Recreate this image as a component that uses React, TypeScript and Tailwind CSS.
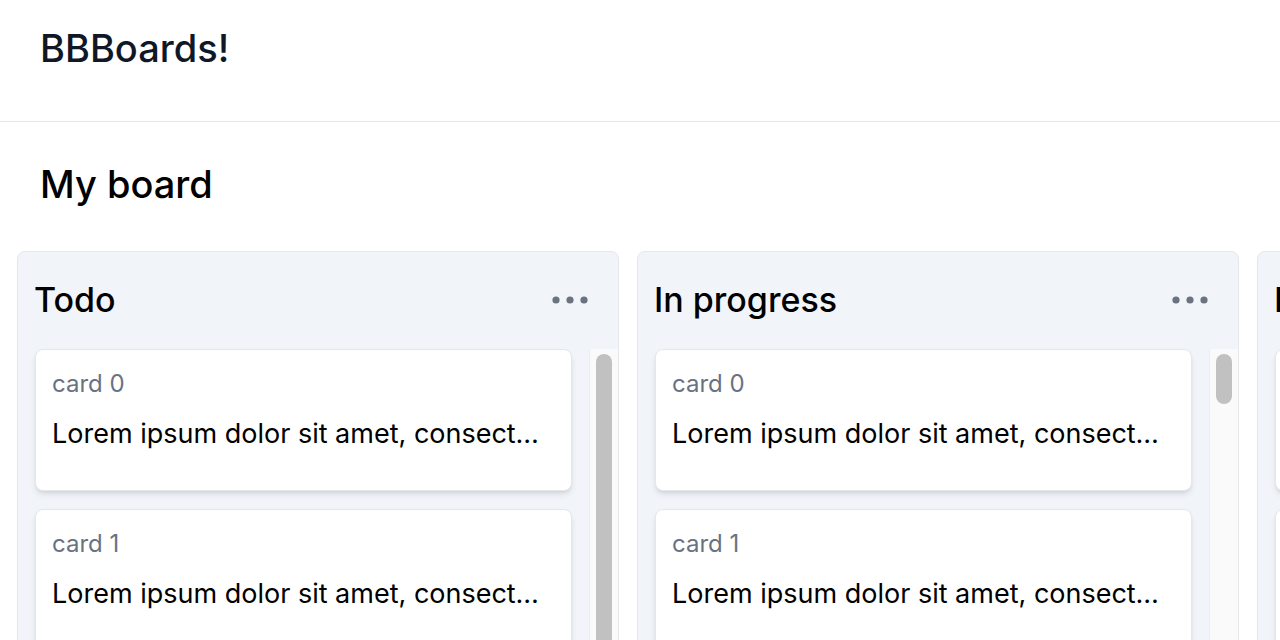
import React from "react";

const LOREM = "Lorem ipsum dolor sit amet, consectetur adipiscing elit, sed do eiusmod tempor incididunt ut labore et dolore magna aliqua.";

function Dots() {
  return (
    <svg width="36" height="8" viewBox="0 0 36 8" aria-hidden="true">
      <circle cx="4" cy="4" r="3.6" fill="#6b7280" />
      <circle cx="18" cy="4" r="3.6" fill="#6b7280" />
      <circle cx="32" cy="4" r="3.6" fill="#6b7280" />
    </svg>
  );
}

function Card({ n }: { n: number }) {
  return (
    <div className="rounded-lg border border-gray-200 bg-white pl-4 pr-6 pt-[18px] pb-[38px] shadow-md">
      <div className="text-[24px] leading-8 text-gray-500">card {n}</div>
      <div className="mt-[16px] truncate text-[27px] leading-9 text-black">{LOREM}</div>
    </div>
  );
}

function Column({ title, thumb }: { title: string; thumb: string }) {
  return (
    <section className="flex h-[420px] w-[602px] shrink-0 flex-col rounded-lg border border-gray-200 bg-[#f1f4f9]">
      <div className="flex items-center justify-between pl-[16px] pr-[30px] pt-[28px] pb-[29px]">
        <h3 className="text-[34px] leading-10 font-medium text-black">{title}</h3>
        <Dots />
      </div>
      <div className="flex min-h-0 flex-1">
        <div className="flex min-w-0 flex-1 flex-col gap-[18px] pl-[17px] pr-[17px]">
          {[0, 1, 2].map((n) => (
            <Card key={n} n={n} />
          ))}
        </div>
        <div className="w-[29px] shrink-0 border-l border-[#ececec] bg-[#fafafa] pt-[5px] pl-[6px]">
          <div className={`w-4 rounded-full bg-[#c1c1c1] ${thumb}`} />
        </div>
      </div>
    </section>
  );
}

export default function App() {
  return (
    <div className="h-screen overflow-hidden bg-white font-['Inter',sans-serif]">
      <header className="h-[122px] border-b border-gray-200 px-10 pt-[28px]">
        <h1 className="text-[38px] leading-10 font-medium text-gray-900">BBBoards!</h1>
      </header>
      <h2 className="px-10 pt-[42px] text-[38px] leading-10 font-medium text-black">My board</h2>
      <div className="mt-[47px] flex gap-[18px] px-[17px]">
        <Column title="Todo" thumb="h-[400px]" />
        <Column title="In progress" thumb="h-[50px]" />
        <Column title="Done" thumb="h-[120px]" />
      </div>
    </div>
  );
}
